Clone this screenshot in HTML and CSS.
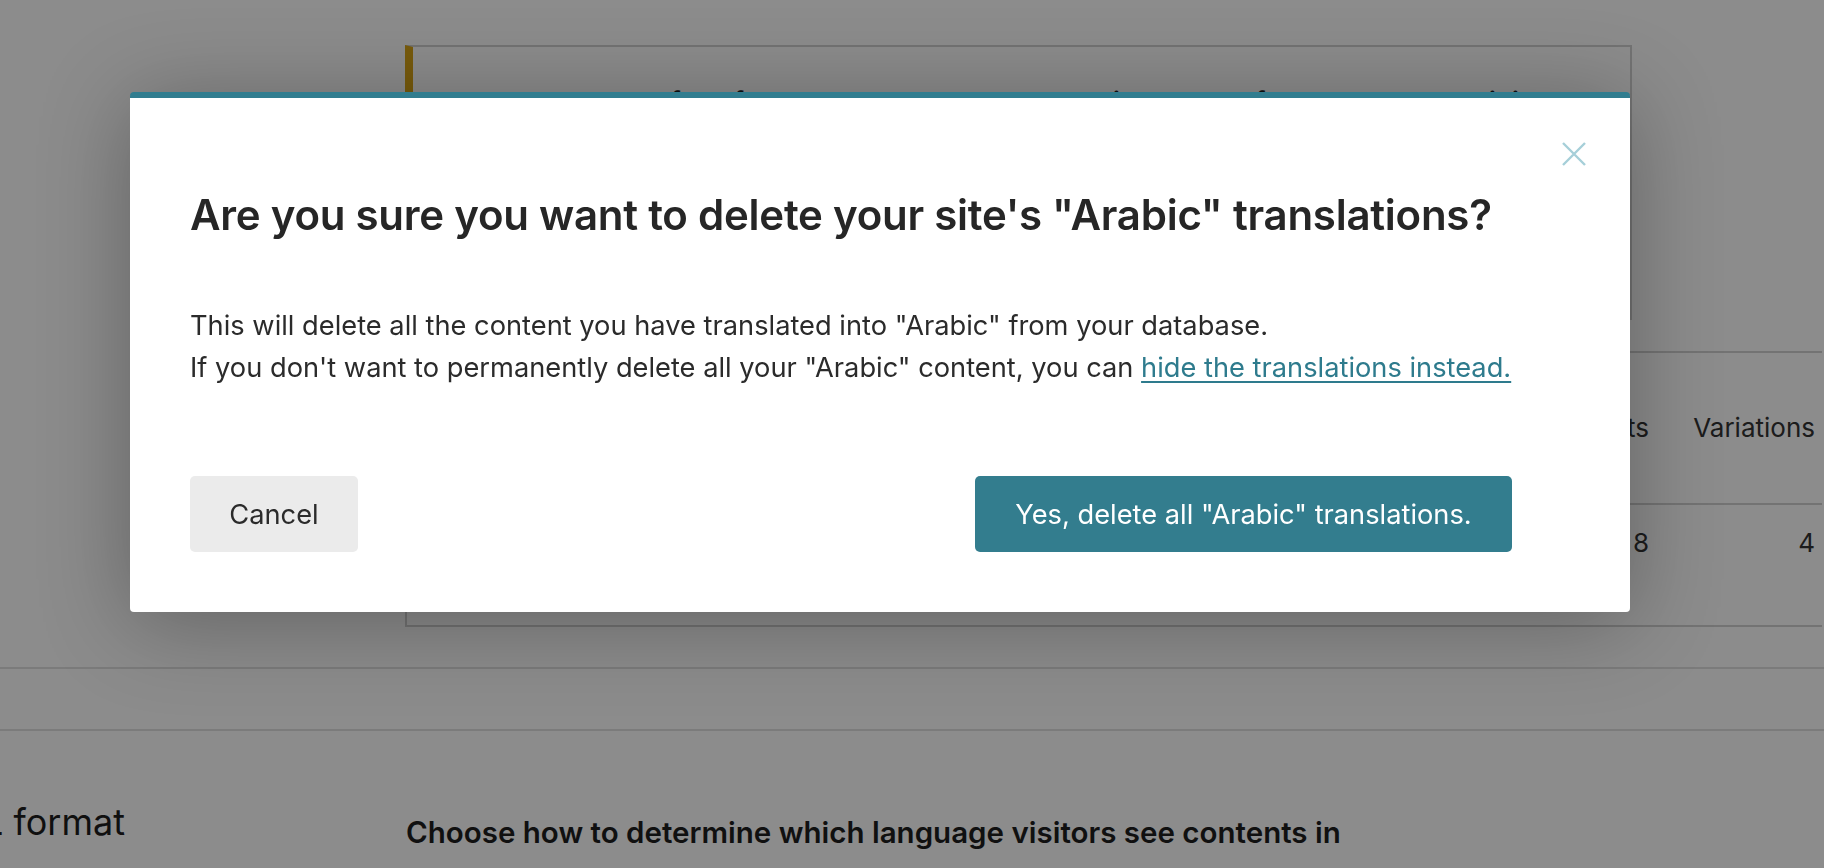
FILE: index.html
```html
<!DOCTYPE html>
<html lang="en">
<head>
<meta charset="utf-8">
<title>Delete translations</title>
<link rel="stylesheet" href="styles.css">
</head>
<body>
<div class="page">
  <div class="top-grid">
    <div class="side"></div>
    <div class="main">
      <div class="notice">
        <p class="notice-text">Based on the default fallback language, the translations would fall back to your original content.</p>
      </div>
      <div class="table">
        <div class="trow thead">
          <div class="cell name">Language</div>
          <div class="cell">Products</div>
          <div class="cell">Variations</div>
        </div>
        <div class="trow tbody">
          <div class="cell name">Arabic</div>
          <div class="cell">8</div>
          <div class="cell">4</div>
        </div>
      </div>
    </div>
  </div>
  <div class="rule rule-a"></div>
  <div class="rule rule-b"></div>
  <div class="bottom-grid">
    <div class="bottom-side"><h3 class="side-title">Language URL format</h3></div>
    <div class="bottom-main"><p class="choose">Choose how to determine which language visitors see contents in</p></div>
  </div>
</div>

<div class="overlay"></div>

<div class="modal" role="dialog">
  <button class="close" aria-label="Close">
    <svg width="24" height="24" viewBox="0 0 24 24"><path d="M1 1 L23 23 M23 1 L1 23" stroke="#a6cfd9" stroke-width="2.4" fill="none"/></svg>
  </button>
  <div class="modal-inner">
    <h2 class="modal-title">Are you sure you want to delete your site's "Arabic" translations?</h2>
    <p class="modal-text">This will delete all the content you have translated into "Arabic" from your database.<br>If you don't want to permanently delete all your "Arabic" content, you can <a href="#" class="link">hide the translations instead.</a></p>
    <div class="actions">
      <button class="btn btn-cancel">Cancel</button>
      <button class="btn btn-danger">Yes, delete all "Arabic" translations.</button>
    </div>
  </div>
</div>
</body>
</html>
```
FILE: styles.css
```css
html, body {
  margin: 0;
  padding: 0;
}
body {
  width: 1824px;
  height: 868px;
  overflow: hidden;
  background: #ffffff;
  font-family: Inter, "Noto Sans", sans-serif;
  color: #333333;
  position: relative;
}
.page {
  padding-top: 45px;
}
.top-grid {
  display: grid;
  grid-template-columns: 405px 1fr;
}
.main {
  display: flex;
  flex-direction: column;
}
.notice {
  width: 1217px;
  height: 273px;
  border-top: 2px solid #d1d1d1;
  border-right: 2px solid #d1d1d1;
  border-left: 8px solid #dba617;
  box-sizing: content-box;
  padding: 0;
}
.notice-text {
  margin: 34px 0 0 56px;
  font-size: 26px;
  line-height: 42px;
  font-weight: 600;
  color: #1e1e1e;
}
.table {
  margin-top: 31px;
  width: 1415px;
  border-top: 2px solid #d1d1d1;
  border-left: 2px solid #d1d1d1;
  border-bottom: 2px solid #d1d1d1;
}
.trow {
  display: grid;
  grid-template-columns: 1fr 160px 166px;
  padding-right: 7px;
}
.thead {
  height: 150px;
  align-items: center;
  border-bottom: 2px solid #d1d1d1;
}
.tbody {
  height: 120px;
  align-items: start;
  padding-top: 20px;
  box-sizing: border-box;
}
.cell {
  font-size: 26px;
  line-height: 36px;
  color: #333333;
  text-align: right;
}
.cell.name {
  text-align: left;
  padding-left: 40px;
}
.rule {
  height: 2px;
  background: #e0e0e0;
}
.rule-a {
  margin-top: 40px;
}
.rule-b {
  margin-top: 60px;
}
.bottom-grid {
  display: grid;
  grid-template-columns: 125px 281px 1fr;
  padding-top: 67px;
}
.bottom-side {
  display: flex;
  justify-content: flex-end;
  white-space: nowrap;
  min-width: 0;
}
.side-title {
  margin: 2px 0 0 0;
  font-size: 36px;
  line-height: 44px;
  font-weight: 400;
  color: #1e1e1e;
}
.bottom-main {
  grid-column: 3;
}
.choose {
  margin: 14px 0 0 0;
  font-size: 29.5px;
  line-height: 40px;
  font-weight: 600;
  color: #1e1e1e;
  white-space: nowrap;
}
.overlay {
  position: fixed;
  inset: 0;
  background: rgba(0, 0, 0, 0.45);
}
.modal {
  position: absolute;
  left: 130px;
  top: 92px;
  width: 1500px;
  box-sizing: border-box;
  background: #ffffff;
  border-top: 6px solid #317d8f;
  border-radius: 4px;
  box-shadow: 0 10px 90px rgba(0, 0, 0, 0.3);
  padding: 90px 60px 60px 60px;
}
.modal-inner {
  width: 1322px;
}
.close {
  position: absolute;
  right: 44px;
  top: 44px;
  width: 24px;
  height: 24px;
  padding: 0;
  border: 0;
  background: none;
  cursor: pointer;
}
.close svg {
  display: block;
}
.modal-title {
  margin: 0;
  font-size: 42px;
  line-height: 53px;
  font-weight: 600;
  letter-spacing: -0.25px;
  color: #262626;
  white-space: nowrap;
}
.modal-text {
  margin: 64px 0 0 0;
  font-size: 27.25px;
  line-height: 42px;
  color: #2b2b2b;
}
.link {
  color: #2e7b8d;
  text-decoration: underline;
  text-underline-offset: 4px;
}
.actions {
  margin-top: 87px;
  display: flex;
  justify-content: space-between;
}
.btn {
  height: 76px;
  border: 0;
  border-radius: 5px;
  font-family: Inter, "Noto Sans", sans-serif;
  font-size: 27.25px;
  padding: 0 30px;
}
.btn-cancel {
  width: 168px;
  background: #ebebeb;
  color: #2b2b2b;
}
.btn-danger {
  width: 537px;
  background: #337d8e;
  color: #ffffff;
}
```
